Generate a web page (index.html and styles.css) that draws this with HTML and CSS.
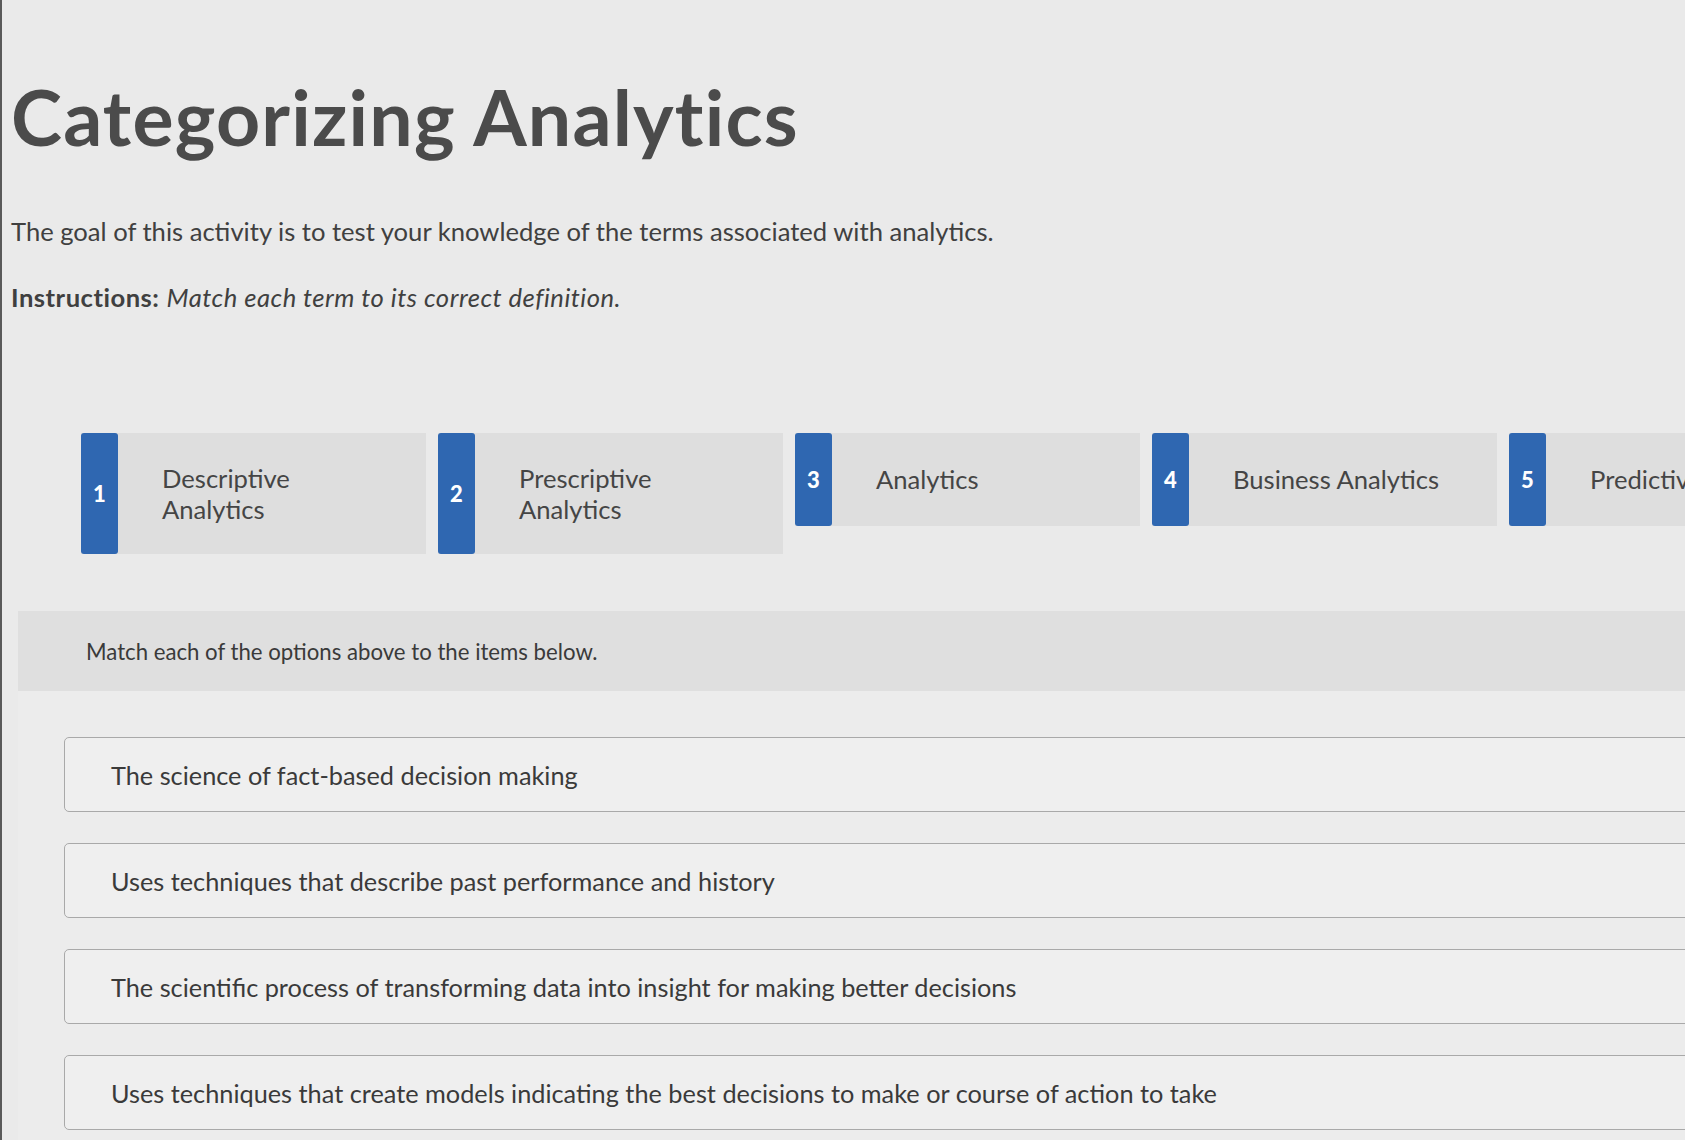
FILE: index.html
```html
<!DOCTYPE html>
<html lang="en">
<head>
<meta charset="utf-8">
<title>Categorizing Analytics</title>
<link rel="stylesheet" href="styles.css">
</head>
<body>
<div class="page">
  <header class="intro">
    <h1 class="title">Categorizing Analytics</h1>
    <p class="goal">The goal of this activity is to test your knowledge of the terms associated with analytics.</p>
    <p class="instructions"><strong>Instructions:</strong> <em>Match each term to its correct definition.</em></p>
  </header>

  <div class="terms">
    <div class="term term-tall"><span class="badge">1</span><span class="term-label">Descriptive<br>Analytics</span></div>
    <div class="term term-tall"><span class="badge">2</span><span class="term-label">Prescriptive<br>Analytics</span></div>
    <div class="term"><span class="badge">3</span><span class="term-label">Analytics</span></div>
    <div class="term"><span class="badge">4</span><span class="term-label">Business Analytics</span></div>
    <div class="term"><span class="badge">5</span><span class="term-label">Predictive Analytics</span></div>
  </div>

  <section class="match">
    <div class="match-head">Match each of the options above to the items below.</div>
    <div class="items">
      <div class="item">The science of fact-based decision making</div>
      <div class="item">Uses techniques that describe past performance and history</div>
      <div class="item">The scientific process of transforming data into insight for making better decisions</div>
      <div class="item">Uses techniques that create models indicating the best decisions to make or course of action to take</div>
    </div>
  </section>
</div>
</body>
</html>
```

FILE: styles.css
```css
html, body {
  margin: 0;
  padding: 0;
}
body {
  width: 1685px;
  height: 1140px;
  overflow: hidden;
  background: #eaeaea;
  font-family: Lato, "Open Sans", Arial, sans-serif;
  color: #3f3f3f;
  border-left: 2px solid #5a5a5a;
  box-sizing: border-box;
}
.page {
  width: 1900px;
}
.intro {
  padding-left: 9px;
}
.title {
  margin: 71px 0 0 0;
  font-size: 77px;
  line-height: 90px;
  font-weight: 700;
  color: #4b4b4b;
  letter-spacing: 1.2px;
}
.goal {
  margin: 55px 0 0 0;
  font-size: 25.6px;
  line-height: 30px;
  color: #404040;
}
.instructions {
  margin: 36px 0 0 0;
  font-size: 25.6px;
  line-height: 30px;
  color: #404040;
  letter-spacing: 0.5px;
}
.instructions strong {
  font-weight: 700;
}
.terms {
  display: flex;
  align-items: flex-start;
  gap: 12px;
  margin-top: 121px;
  padding-left: 79px;
}
.term {
  flex: 0 0 345px;
  display: flex;
  align-items: stretch;
  background: #dedede;
  min-height: 93px;
}
.term-tall {
  min-height: 121px;
}
.badge {
  flex: 0 0 37px;
  background: #2f67b1;
  color: #ffffff;
  font-weight: 900;
  font-size: 22px;
  display: flex;
  align-items: center;
  justify-content: center;
  border-radius: 3px;
}
.term-label {
  align-self: center;
  margin-left: 44px;
  font-size: 25.6px;
  line-height: 31px;
  color: #454545;
}
.match {
  margin-top: 57px;
  margin-left: 16px;
  background: #ececec;
  padding-bottom: 40px;
}
.match-head {
  background: #dfdfdf;
  height: 80px;
  display: flex;
  align-items: center;
  padding-left: 68px;
  font-size: 22.2px;
  color: #3a3a3a;
}
.items {
  display: flex;
  flex-direction: column;
  gap: 31px;
  padding: 46px 0 0 46px;
}
.item {
  height: 75px;
  box-sizing: border-box;
  display: flex;
  align-items: center;
  padding-left: 46px;
  background: #efefef;
  border: 1.5px solid #a9a9a9;
  border-radius: 5px;
  font-size: 25.3px;
  color: #3a3a3a;
}
```
